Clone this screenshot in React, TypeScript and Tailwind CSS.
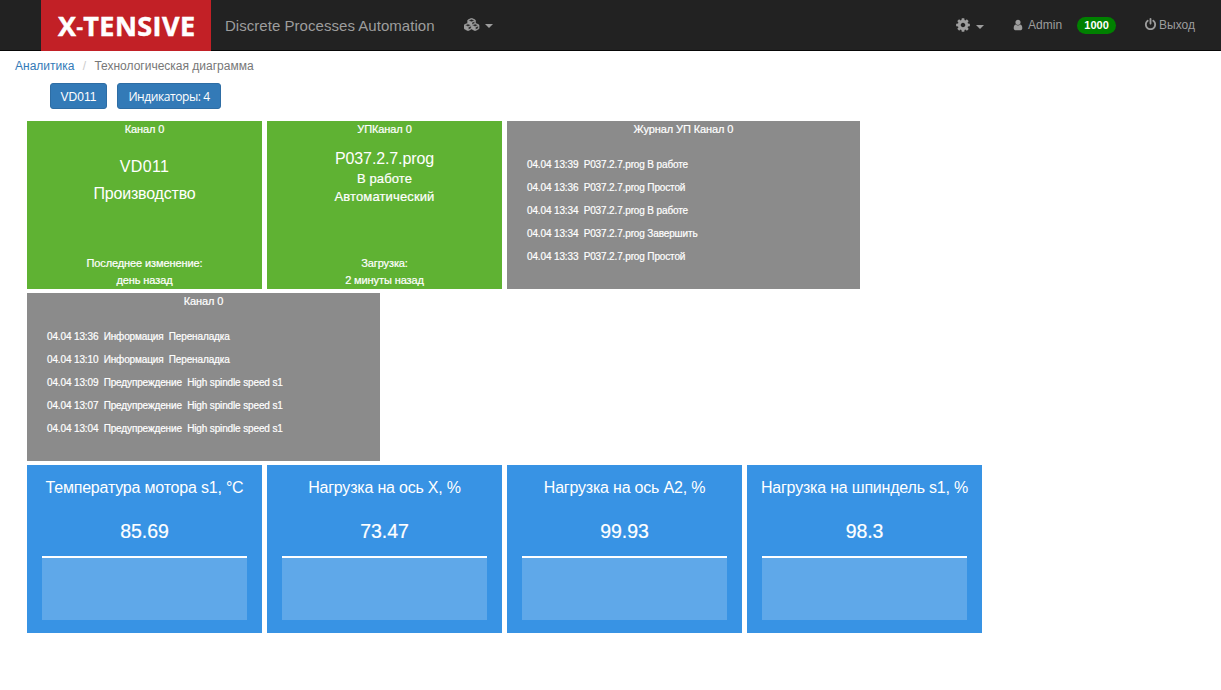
import type { ReactNode } from 'react';

const COG =
  'M1152 896q0-106-75-181t-181-75-181 75-75 181 75 181 181 75 181-75 75-181zm512-109v222q0 12-8 23t-20 13l-185 28q-19 54-39 91 35 50 107 138 10 12 10 25t-9 23q-27 37-99 108t-94 71q-12 0-26-9l-138-108q-44 23-91 38-16 136-29 186-7 28-36 28h-222q-14 0-24.5-8.5t-11.5-21.5l-28-184q-49-16-90-37l-141 107q-10 9-25 9-14 0-25-11-126-114-165-168-7-10-7-23 0-12 8-23 15-21 51-66.5t54-70.5q-27-50-41-99l-183-27q-13-2-21-12.5t-8-23.5v-222q0-12 8-23t19-13l186-28q14-46 39-92-40-57-107-138-10-12-10-24 0-10 9-23 26-36 98.5-107.5t94.5-71.5q13 0 26 10l138 107q44-23 91-38 16-136 29-186 7-28 36-28h222q14 0 24.5 8.5t11.5 21.5l28 184q49 16 90 37l142-107q9-9 24-9 13 0 25 10 129 119 165 170 7 8 7 22 0 12-8 23-15 21-51 66.5t-54 70.5q26 50 41 98l183 28q13 2 21 12.5t8 23.5z';
const USER =
  'M1536 1399q0 109-62.5 187t-150.5 78h-854q-88 0-150.5-78t-62.5-187q0-85 8.5-160.5t31.5-152 58.5-131 94-89 134.5-34.5q131 128 313 128t313-128q76 0 134.5 34.5t94 89 58.5 131 31.5 152 8.5 160.5zm-256-887q0 159-112.5 271.5t-271.5 112.5-271.5-112.5-112.5-271.5 112.5-271.5 271.5-112.5 271.5 112.5 112.5 271.5z';
const POWER =
  'M1664 896q0 156-61 298t-164 245-245 164-298 61-298-61-245-164-164-245-61-298q0-182 80.5-343t226.5-270q43-32 95.5-25t83.5 50q32 42 24.5 94.5t-49.5 84.5q-98 74-151.5 181t-53.5 228q0 104 40.5 198.5t109.5 163.5 163.5 109.5 198.5 40.5 198.5-40.5 163.5-109.5 109.5-163.5 40.5-198.5q0-121-53.5-228t-151.5-181q-42-32-49.5-84.5t24.5-94.5q31-43 84-50t95 25q146 109 226.5 270t80.5 343zm-640-768v640q0 52-38 90t-90 38-90-38-38-90v-640q0-52 38-90t90-38 90 38 38 90z';
const CUBES =
  'M640 1632l384-192v-314l-384 164v342zm-64-454l404-173-404-173-404 173zm1088 454l384-192v-314l-384 164v342zm-64-454l404-173-404-173-404 173zm-448-293l384-165v-266l-384 164v267zm-64-379l441-189-441-189-441 189zm1088 518v416q0 36-19 67t-52 47l-448 224q-25 14-57 14t-57-14l-448-224q-5-2-7-4-2 2-7 4l-448 224q-25 14-57 14t-57-14l-448-224q-33-16-52-47t-19-67v-416q0-38 21.5-70t56.5-48l434-186v-400q0-38 21.5-70t56.5-48l448-192q23-10 50-10t50 10l448 192q35 16 56.5 48t21.5 70v400l434 186q36 16 57 48t21 70z';

function Icon({ d, wide, className }: { d: string; wide?: boolean; className: string }) {
  return (
    <svg viewBox={wide ? '0 0 2304 1792' : '0 0 1792 1792'} className={`shrink-0 fill-current ${className}`}>
      <path d={d} />
    </svg>
  );
}

function Caret({ className }: { className: string }) {
  return <span className={`h-0 w-0 border-x-4 border-t-4 border-x-transparent border-t-current ${className}`} />;
}

function Logo() {
  return (
    <svg
      width="170"
      height="51"
      className="block fill-white stroke-white font-['Open_Sans',sans-serif] text-[27px] font-bold [stroke-width:0.5px]"
    >
      <text x="17" y="35.5" textLength="137" lengthAdjust="spacing">
        X
        <tspan dy="-2" className="text-[20px]">
          -
        </tspan>
        <tspan dy="2">TENSIVE</tspan>
      </text>
    </svg>
  );
}

function Navbar() {
  return (
    <header className="flex h-[51px] border-b border-[#080808] bg-[#222] text-[#9d9d9d]">
      <div className="ml-[41px] h-[51px] w-[170px] bg-[#c22026]">
        <Logo />
      </div>
      <div className="ml-[14px] w-[210px] pt-[15px] text-[15px] leading-[21px] tracking-[0.04px] whitespace-nowrap">
        Discrete Processes Automation
      </div>
      <div className="ml-[29px] flex pt-[18px]">
        <Icon d={CUBES} wide className="h-[13px] w-[16px] stroke-current [stroke-width:60px]" />
        <Caret className="mt-[6px] ml-[5px]" />
      </div>
      <div className="mr-[26px] ml-auto flex pt-[15px] text-xs leading-[20px]">
        <Icon d={COG} className="mt-[2px] h-[16px] w-[16px]" />
        <Caret className="mt-[10px] ml-[5px]" />
        <Icon d={USER} className="mt-[4px] ml-[28px] h-[12px] w-[12px]" />
        <span className="ml-[4px]">Admin</span>
        <span className="mt-[2px] ml-[15px] h-[17px] w-[39px] rounded-full bg-[#008000] text-center text-[11px] leading-[17px] font-bold text-white">
          1000
        </span>
        <Icon d={POWER} className="mt-[3px] ml-[28px] h-[13px] w-[13px]" />
        <span className="ml-[2px]">Выход</span>
      </div>
    </header>
  );
}

function Tile({ className, children }: { className: string; children: ReactNode }) {
  return <section className={`h-[168px] shrink-0 text-center text-white ${className}`}>{children}</section>;
}

const smallText = 'text-[11px] tracking-[-0.1px] [-webkit-text-stroke:0.2px_white]';

function StatusTile({ title, children, footer }: { title: string; children: ReactNode; footer: [string, string] }) {
  return (
    <Tile className="flex w-[235px] flex-col bg-[#5fb233]">
      <h2 className={`leading-[16px] ${smallText}`}>{title}</h2>
      {children}
      <div className={`mt-auto leading-[17px] ${smallText}`}>
        {footer[0]}
        <br />
        {footer[1]}
      </div>
    </Tile>
  );
}

function LogTile({ title, rows }: { title: string; rows: string[] }) {
  return (
    <Tile className="w-[353px] bg-[#8b8b8b]">
      <h2 className={`leading-[16px] ${smallText}`}>{title}</h2>
      <ul className="mt-4 pl-5 text-left text-[10px] leading-[23px] tracking-[-0.135px] whitespace-pre [-webkit-text-stroke:0.2px_white]">
        {rows.map((row) => (
          <li key={row}>{row}</li>
        ))}
      </ul>
    </Tile>
  );
}

function MetricTile({ title, value }: { title: string; value: string }) {
  return (
    <Tile className="w-[235px] bg-[#3893e4]">
      <h2 className="pt-3 text-base leading-[22px] tracking-[-0.2px] whitespace-nowrap">{title}</h2>
      <p className="mt-[19px] text-[19.5px] leading-[26px] tracking-[-0.1px] [-webkit-text-stroke:0.2px_white]">{value}</p>
      <div className="mx-[15px] mt-[12px] h-[64px] border-t-2 border-white bg-[#5fa8e9]" />
    </Tile>
  );
}

const programLog = [
  '04.04 13:39  P037.2.7.prog В работе',
  '04.04 13:36  P037.2.7.prog Простой',
  '04.04 13:34  P037.2.7.prog В работе',
  '04.04 13:34  P037.2.7.prog Завершить',
  '04.04 13:33  P037.2.7.prog Простой',
];

const channelLog = [
  '04.04 13:36  Информация  Переналадка',
  '04.04 13:10  Информация  Переналадка',
  '04.04 13:09  Предупреждение  High spindle speed s1',
  '04.04 13:07  Предупреждение  High spindle speed s1',
  '04.04 13:04  Предупреждение  High spindle speed s1',
];

const metrics = [
  { title: 'Температура мотора s1, °C', value: '85.69' },
  { title: 'Нагрузка на ось X, %', value: '73.47' },
  { title: 'Нагрузка на ось A2, %', value: '99.93' },
  { title: 'Нагрузка на шпиндель s1, %', value: '98.3' },
];

const buttonClass = 'h-[26px] rounded-[3px] border border-[#2e6da4] bg-[#337ab7] text-xs text-white';

export default function App() {
  return (
    <div className="min-h-[690px] bg-white font-['Liberation_Sans',Arial,sans-serif]">
      <Navbar />
      <nav className="flex pt-[6px] pl-[15px] text-xs leading-[18px]">
        <a className="text-[#337ab7]">Аналитика</a>
        <span className="w-[20px] text-center text-[#ccc]">/</span>
        <span className="text-[#777]">Технологическая диаграмма</span>
      </nav>
      <div className="mt-2 ml-[50px] flex gap-[10px]">
        <button className={`w-[57px] pt-[2px] leading-[22px] ${buttonClass}`}>VD011</button>
        <button
          className={`w-[104px] pt-px font-['Open_Sans',sans-serif] leading-[23px] font-medium tracking-[-0.42px] ${buttonClass}`}
        >
          Индикаторы: 4
        </button>
      </div>
      <main className="mt-3 ml-[27px] flex flex-col gap-1">
        <div className="flex gap-[5px]">
          <StatusTile title="Канал 0" footer={['Последнее изменение:', 'день назад']}>
            <div className="mt-[16px] text-base leading-[27px]">
              <div className="tracking-[0.35px]">VD011</div>
              <div className="tracking-[-0.2px]">Производство</div>
            </div>
          </StatusTile>
          <StatusTile title="УПКанал 0" footer={['Загрузка:', '2 минуты назад']}>
            <div className="mt-[12px] text-base leading-[20px] tracking-[-0.12px]">P037.2.7.prog</div>
            <div className="pt-px text-[13px] leading-[18px] tracking-[0.13px] [-webkit-text-stroke:0.2px_white]">
              В работе
              <br />
              Автоматический
            </div>
          </StatusTile>
          <LogTile title="Журнал УП Канал 0" rows={programLog} />
        </div>
        <LogTile title="Канал 0" rows={channelLog} />
        <div className="flex gap-[5px]">
          {metrics.map((m) => (
            <MetricTile key={m.title} title={m.title} value={m.value} />
          ))}
        </div>
      </main>
    </div>
  );
}
